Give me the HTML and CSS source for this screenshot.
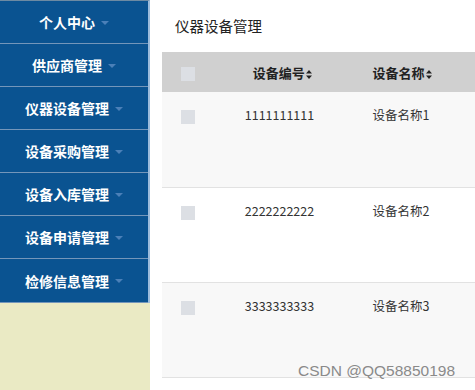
FILE: index.html
```html
<!DOCTYPE html>
<html>
<head>
    <meta charset="utf-8">
    <link rel="stylesheet" href="styles.css">
</head>
<body>
    <div class="page">
        <div class="sidebar">
            <ul class="menu">
                <li><a href="#">个人中心<span class="caret"></span></a></li>
                <li><a href="#">供应商管理<span class="caret"></span></a></li>
                <li><a href="#">仪器设备管理<span class="caret"></span></a></li>
                <li><a href="#">设备采购管理<span class="caret"></span></a></li>
                <li><a href="#">设备入库管理<span class="caret"></span></a></li>
                <li><a href="#">设备申请管理<span class="caret"></span></a></li>
                <li><a href="#">检修信息管理<span class="caret"></span></a></li>
            </ul>
        </div>
        <div class="main">
            <h2 class="title">仪器设备管理</h2>
            <table class="grid">
                <thead>
                    <tr>
                        <th class="col-check"><span class="check"></span></th>
                        <th class="col-no">设备编号<svg class="sort" width="6" height="9" viewBox="0 0 6 9"><path d="M3 0L6 3.5H0Z M3 9L0 5.5H6Z" fill="#222"/></svg></th>
                        <th class="col-name">设备名称<svg class="sort" width="6" height="9" viewBox="0 0 6 9"><path d="M3 0L6 3.5H0Z M3 9L0 5.5H6Z" fill="#222"/></svg></th>
                        <th></th>
                    </tr>
                </thead>
                <tbody>
                    <tr>
                        <td class="col-check"><span class="check"></span></td>
                        <td class="col-no">1111111111</td>
                        <td class="col-name">设备名称1</td>
                        <td></td>
                    </tr>
                    <tr>
                        <td class="col-check"><span class="check"></span></td>
                        <td class="col-no">2222222222</td>
                        <td class="col-name">设备名称2</td>
                        <td></td>
                    </tr>
                    <tr>
                        <td class="col-check"><span class="check"></span></td>
                        <td class="col-no">3333333333</td>
                        <td class="col-name">设备名称3</td>
                        <td></td>
                    </tr>
                </tbody>
            </table>
        </div>
    </div>
    <div class="watermark">CSDN @QQ58850198</div>
</body>
</html>
```
FILE: styles.css
```css
body {
    margin: 0;
    font-family: "Noto Sans CJK SC", "Noto Sans", sans-serif;
    color: #333;
    background-color: #fff;
}
.page {
    display: flex;
    height: 390px;
}
.sidebar {
    width: 150px;
    flex-shrink: 0;
    background-color: #eaeac4;
}
.menu {
    list-style: none;
    margin: 0;
    padding: 0;
    width: 148px;
    border-right: 2px solid #9cbcdc;
    border-top: 1px solid #6d8aa3;
}
.menu li {
    height: 42px;
    border-bottom: 1px solid #7496ba;
    background-color: #0a5391;
}
.menu li:last-child {
    height: 43px;
}
.menu a {
    display: flex;
    align-items: center;
    justify-content: center;
    height: 100%;
    color: #fff;
    font-weight: bold;
    font-size: 14px;
    text-decoration: none;
}
.caret {
    display: inline-block;
    margin-left: 6px;
    margin-top: 1px;
    border-top: 4px solid #4b80b8;
    border-left: 4px solid transparent;
    border-right: 4px solid transparent;
}
.main {
    flex: 1;
    padding-left: 12px;
}
.title {
    margin: 0;
    padding: 15px 0 0 13px;
    height: 52px;
    box-sizing: border-box;
    font-size: 14.5px;
    font-weight: normal;
    color: #222;
}
.grid {
    width: 100%;
    border-collapse: collapse;
    font-size: 12.5px;
}
.grid thead tr {
    height: 40px;
    background-color: #d0d0d0;
}
.grid th {
    font-weight: bold;
    font-size: 13px;
    color: #222;
    text-align: left;
}
.grid tbody tr {
    height: 95px;
    border-bottom: 1px solid #e2e2e2;
}
.grid tbody tr:nth-child(odd) {
    background-color: #f8f8f8;
}
.grid td {
    vertical-align: top;
    padding-top: 15px;
    line-height: 16px;
}
.col-check {
    width: 68px;
    padding-left: 19px;
    box-sizing: border-box;
}
.check {
    display: inline-block;
    width: 14px;
    height: 14px;
    background-color: #dcdfe4;
    vertical-align: middle;
}
.grid td .check {
    margin-top: 1px;
}
.grid .col-no {
    width: 122px;
    padding-left: 15px;
    box-sizing: border-box;
}
.grid th.col-no {
    padding-left: 23px;
}
.grid .col-name {
    width: 100px;
    padding-left: 21px;
}
.sort {
    margin-left: 1px;
    vertical-align: -1px;
}
.watermark {
    position: absolute;
    left: 298px;
    top: 362px;
    font-family: "Liberation Sans", Arial, sans-serif;
    font-size: 15.5px;
    color: #8a8a8a;
}
```
